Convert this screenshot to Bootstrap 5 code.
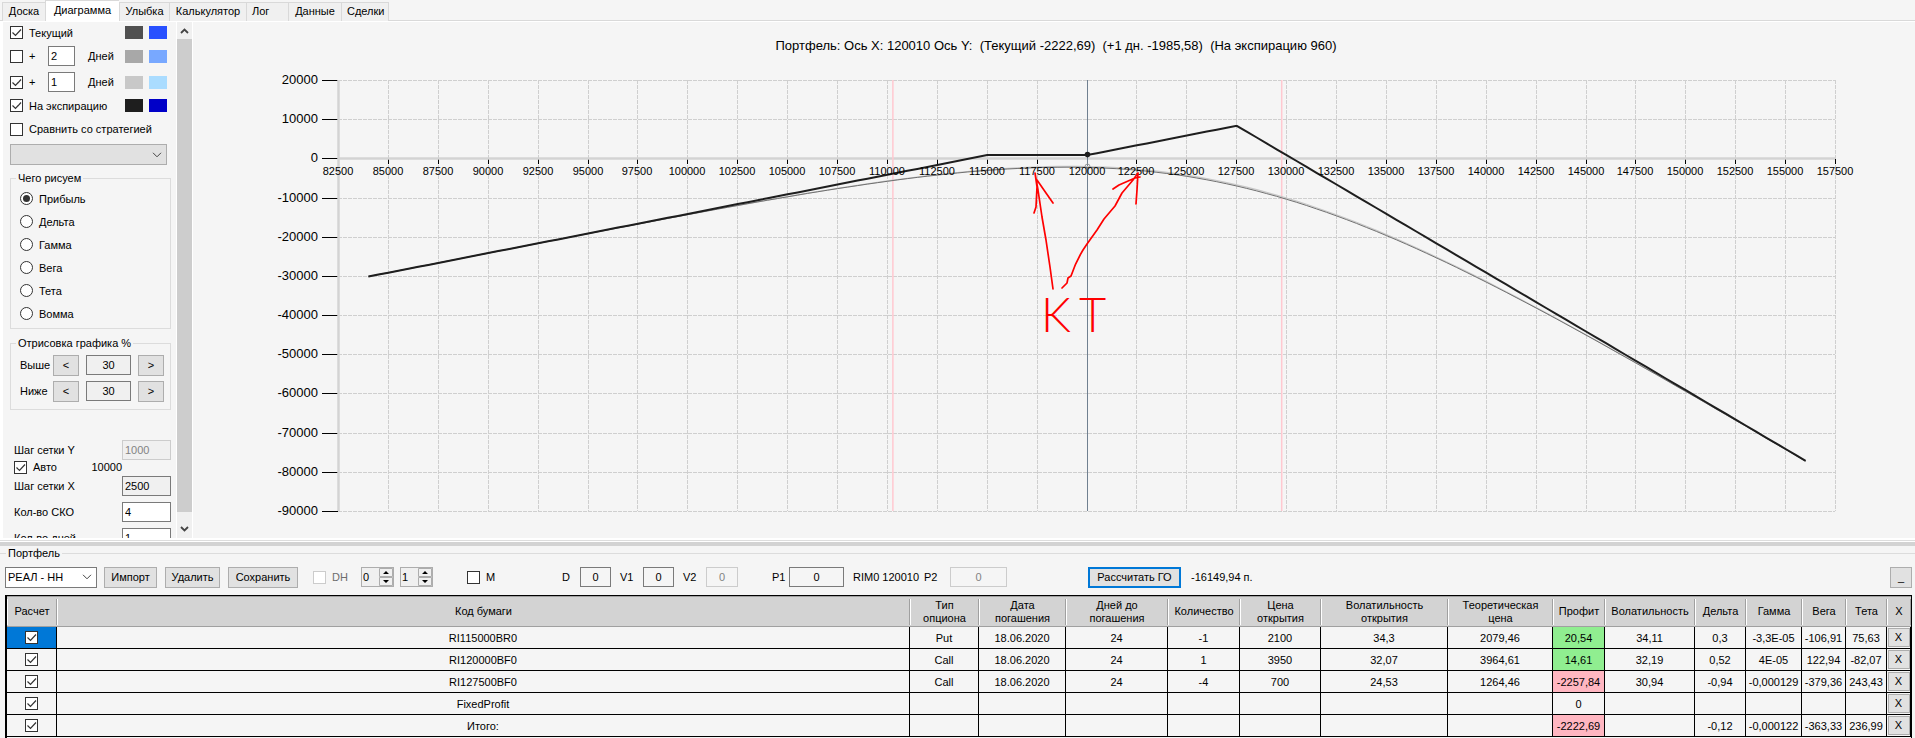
<!DOCTYPE html>
<html lang="ru">
<head>
<meta charset="utf-8">
<meta name="viewport" content="width=device-width, initial-scale=1">
<title>Портфель</title>
<link rel="stylesheet" href="https://cdn.jsdelivr.net/npm/bootstrap@5.3.0/dist/css/bootstrap.min.css">
<style>
:root{--face:#f5f5f5;--ctl:#e1e1e1;--ctl-line:#adadad;--box-line:#7a7a7a;--group:#dcdcdc}
html{height:100%;overflow:hidden}
body{font:11px/14px "Liberation Sans",Arial,sans-serif;color:#000;background:var(--face);height:100%;overflow:hidden}
button,input,select{font:inherit;color:inherit}
/* tabs */
.nav-tabs{height:22px;padding-left:2px;border-bottom:1px solid #fff;background:var(--face);box-shadow:inset 0 -1px 0 #d9d9d9}
.nav-tabs .nav-link{height:19px;padding:0 5px;border:1px solid #d9d9d9;border-right-width:0;border-bottom:0;border-radius:0;margin:0;background:#f0f0f0;color:#000;line-height:17px;text-align:center}
.nav-tabs .nav-item:last-child .nav-link{border-right-width:1px}
.nav-tabs .nav-link.active{height:21px;background:#fff;border-color:#d9d9d9;color:#000;line-height:18px}
.t1{width:43px}.t2{width:74px}.t3{width:50px}.t4{width:77px}.t5{width:42px;text-align:left!important}.t6{width:53px}.t7{width:48px}
/* form controls */
.form-check-input{width:13px;height:13px;margin:0;flex:none;border:1px solid #333;border-radius:0!important;background-color:#fff;float:none}
.form-check-input:checked{background-color:#fff;border-color:#333}
.form-check-input:checked[type=checkbox]{background-image:url("data:image/svg+xml,%3csvg xmlns='http://www.w3.org/2000/svg' viewBox='0 0 11 11'%3e%3cpath fill='none' stroke='%23333' stroke-width='1.2' d='M1.5 5.5l3 3L10 2.5'/%3e%3c/svg%3e")}
.form-check-input[type=radio]{border-radius:50%!important}
.form-check-input:checked[type=radio]{background-image:url("data:image/svg+xml,%3csvg xmlns='http://www.w3.org/2000/svg' viewBox='0 0 11 11'%3e%3ccircle cx='5.5' cy='5.5' r='3.5' fill='%23333'/%3e%3c/svg%3e")}
.form-check-input:disabled{opacity:1;border-color:#ccc}
.form-check-input:disabled~span{color:#6d6d6d}
.form-control{height:20px;min-height:0;padding:0 2px;border:1px solid var(--box-line);border-radius:0;background:#fff;font-size:11px;line-height:18px;color:#000;flex:none}
.form-control[readonly]{background:#f0f0f0}
.form-control:disabled{background:#f0f0f0;border-color:#ccc;color:#838383;opacity:1}
.tools .form-control{background:#f5f5f5;text-align:center}
.form-select{height:21px;padding:0 18px 0 2px;border:1px solid var(--box-line);border-radius:0;font-size:11px;line-height:18px;color:#000;background-color:#fff;background-size:10px 6px;background-position:right 4px center;background-image:url("data:image/svg+xml,%3csvg xmlns='http://www.w3.org/2000/svg' viewBox='0 0 10 6'%3e%3cpath fill='none' stroke='%23444' d='M1 .8l4 4 4-4'/%3e%3c/svg%3e")}
.form-select.grey{width:157px;margin-top:2px;background-color:var(--ctl);border-color:var(--ctl-line)}
.btn{--bs-btn-border-radius:0;height:21px;padding:0;border:1px solid var(--ctl-line);background:var(--ctl);color:#000;font-size:11px;line-height:19px;flex:none}
.btn.focus-btn{border:2px solid #0078d7;line-height:17px}
fieldset{border:1px solid var(--group)}
legend{float:none;width:auto;margin:0;padding:0 2px;font-size:11px;line-height:14px}
/* side panel */
.workspace{min-height:0}
.side{width:176px;flex:none;padding-left:7px;overflow:hidden;border-left:3px solid #fff}
.rowline{display:flex;align-items:center}
.h21{height:21px}.h26{height:26px}
.side fieldset{width:161px;padding:2px 0 3px 9px;margin-top:6px}
.side fieldset.range{padding-bottom:5px;margin-top:7px}
.side legend{margin-left:-4px}
.w27{width:27px}.w26{width:26px}.w45{width:45px;margin:0 7px}.w49{width:49px}
.range label{width:33px}
.chk-gap{gap:6px}
.plus{width:19px}
.unit{margin-left:13px}
.swatch{width:18px;height:13px}
.swatches{display:flex;gap:6px;margin-left:auto;margin-right:9px}
.steps{width:161px;padding-left:4px;margin-top:30px}
.steps .auto{height:14px;margin-bottom:2px}
.steps .auto .step-value{margin-right:49px}
.sbar{width:17px;flex:none;background:#f0f0f0;border:solid #fff;border-width:0 1px}
.sbar svg{display:block;width:15px;flex:none}
.thumb{background:#cdcdcd;flex:1 1 auto}
/* splitter and lower panel */
.splitter{height:8px;flex:none;background:#d3d3d3;border-top:2px solid #fff;box-shadow:inset 0 1px 0 #ddd,inset 0 2px 0 #fff}
.folio{border-width:1px 0 0;flex:none}
.folio legend{margin-left:6px}
.tools{display:grid;grid-template-columns:99px 61px 63px 85px 48px 39px 67px 95px 18px 40px 23px 40px 23px 66px 17px 64px 71px 26px 138px 103px 1fr 22px;align-items:center;height:35px;padding:0 3px 1px 5px;white-space:nowrap}
.spin{position:relative;display:flex;width:33px;height:20px;border:1px solid var(--ctl-line);background:#f0f0f0}
.spin input{width:17px;border:0;background:none;padding:0 1px;line-height:16px}
.spin svg{width:14px;height:18px}
.gridbox{margin:0 3px 0 5px;border:1px solid #000;border-left-width:2px;border-bottom:0;padding-bottom:1px}
.quotes{width:100%;table-layout:fixed;border-collapse:separate;border-spacing:0;text-align:center;border-top:1px solid #a0a0a0}
.quotes th{height:30px;padding:0;background:linear-gradient(#a0a0a0,#a0a0a0) right 2px/1px 26px no-repeat,linear-gradient(#fff,#fff) left 2px/1px 26px no-repeat,#d3d3d3;border-bottom:1px solid #a0a0a0;font-weight:400;line-height:13px;vertical-align:middle}
.quotes td{height:22px;padding:0;border-right:1px solid #000;border-bottom:1px solid #000;line-height:18px;vertical-align:middle;white-space:nowrap}
.quotes .form-check-input{display:block;margin:0 auto}
.quotes .btn{display:block;width:22px;height:19px;line-height:17px;margin:0 auto}
.sel{background:#0078d7}.gain{background:#90ee90}.loss{background:#ffb6c1}
/* chart */
.chart{min-width:0}
.chart svg{display:block;width:100%;height:100%}
.chart text{fill:#000}
.grid-line{stroke:#cfcfcf;stroke-dasharray:4 1;shape-rendering:crispEdges}
.tick{stroke:#000;shape-rendering:crispEdges}
.ylab,.ttl{font-size:13px}
.ttl{white-space:pre}
.xlab{font-size:11px;text-anchor:middle}
.ylab{text-anchor:end}
.ink{fill:none;stroke:#f00;stroke-width:1.7;stroke-linecap:round;stroke-linejoin:round}
.chart text.note{fill:#f00;font:300 47px Lato,sans-serif}
</style>
</head>
<body class="d-flex flex-column">
<ul class="nav nav-tabs flex-nowrap align-items-end flex-shrink-0">
  <li class="nav-item"><a class="nav-link t1" href="#">Доска</a></li>
  <li class="nav-item"><a class="nav-link t2 active" href="#">Диаграмма</a></li>
  <li class="nav-item"><a class="nav-link t3" href="#">Улыбка</a></li>
  <li class="nav-item"><a class="nav-link t4" href="#">Калькулятор</a></li>
  <li class="nav-item"><a class="nav-link t5" href="#">Лог</a></li>
  <li class="nav-item"><a class="nav-link t6" href="#">Данные</a></li>
  <li class="nav-item"><a class="nav-link t7" href="#">Сделки</a></li>
</ul>

<main class="workspace d-flex flex-grow-1">
  <aside class="side">
    <div class="rowline h21"><label class="rowline chk-gap"><input class="form-check-input" type="checkbox" checked><span>Текущий</span></label>
      <span class="swatches"><i class="swatch" style="background:#505050"></i><i class="swatch" style="background:#2850ff"></i></span></div>
    <div class="rowline h26"><label class="rowline chk-gap"><input class="form-check-input" type="checkbox"><span class="plus">+</span></label>
      <input class="form-control w27" value="2" aria-label="Дней, первая линия"><span class="unit">Дней</span>
      <span class="swatches"><i class="swatch" style="background:#a8a8a8"></i><i class="swatch" style="background:#78a8ff"></i></span></div>
    <div class="rowline h26"><label class="rowline chk-gap"><input class="form-check-input" type="checkbox" checked><span class="plus">+</span></label>
      <input class="form-control w27" value="1" aria-label="Дней, вторая линия"><span class="unit">Дней</span>
      <span class="swatches"><i class="swatch" style="background:#c8c8c8"></i><i class="swatch" style="background:#aadcff"></i></span></div>
    <div class="rowline h21"><label class="rowline chk-gap"><input class="form-check-input" type="checkbox" checked><span>На экспирацию</span></label>
      <span class="swatches"><i class="swatch" style="background:#1e1e1e"></i><i class="swatch" style="background:#0000c8"></i></span></div>
    <label class="rowline h26 chk-gap"><input class="form-check-input" type="checkbox"><span>Сравнить со стратегией</span></label>
    <select class="form-select grey" aria-label="Стратегия"><option></option></select>

    <fieldset>
      <legend>Чего рисуем</legend>
      <div id="modes"></div>
    </fieldset>

    <fieldset class="range">
      <legend>Отрисовка графика %</legend>
      <div class="rowline h26"><label for="up">Выше</label><button class="btn w26">&lt;</button><input id="up" class="form-control w45 text-center" value="30" readonly><button class="btn w26">&gt;</button></div>
      <div class="rowline h26"><label for="down">Ниже</label><button class="btn w26">&lt;</button><input id="down" class="form-control w45 text-center" value="30" readonly><button class="btn w26">&gt;</button></div>
    </fieldset>

    <div class="steps">
      <div class="rowline justify-content-between"><label for="sy">Шаг сетки Y</label><input id="sy" class="form-control w49" value="1000" disabled></div>
      <div class="rowline auto justify-content-between"><label class="rowline chk-gap"><input class="form-check-input" type="checkbox" checked><span>Авто</span></label><span class="step-value">10000</span></div>
      <div class="rowline justify-content-between"><label for="sx">Шаг сетки X</label><input id="sx" class="form-control w49" value="2500" readonly></div>
      <div class="rowline justify-content-between" style="margin-top:6px"><label for="sko">Кол-во СКО</label><input id="sko" class="form-control w49" value="4"></div>
      <div class="rowline justify-content-between" style="margin-top:6px"><label for="dn">Кол-во дней</label><input id="dn" class="form-control w49" value="1"></div>
    </div>
  </aside>
  <div class="sbar d-flex flex-column" aria-hidden="true">
    <svg viewBox="0 0 15 17" height="17"><path d="M4 11l3.500-3.500L11 11" fill="none" stroke="#444" stroke-width="1.800"/></svg>
    <div class="thumb"></div>
    <svg viewBox="0 0 15 26" height="26"><path d="M4 15l3.500 3.500L11 15" fill="none" stroke="#444" stroke-width="1.800"/></svg>
  </div>
  <section class="chart flex-grow-1">
    <svg id="plot" viewBox="0 0 1722 516" role="img" aria-label="Диаграмма портфеля"></svg>
  </section>
</main>

<div class="splitter"></div>

<fieldset class="folio">
  <legend>Портфель</legend>
  <div class="tools">
    <select class="form-select" style="width:92px" aria-label="Портфель"><option>РЕАЛ - НН</option></select>
    <button class="btn" style="width:53px">Импорт</button>
    <button class="btn" style="width:55px">Удалить</button>
    <button class="btn" style="width:70px">Сохранить</button>
    <label class="rowline chk-gap"><input class="form-check-input" type="checkbox" disabled><span>DH</span></label>
    <div class="spin"><input value="0" aria-label="DH от"><svg viewBox="0 0 14 18"><path d="M.5.5h13v8H.5zM.5 9.500h13v8H.5z" fill="#f0f0f0" stroke="#adadad"/><path d="M4 6h6L7 3zM4 12h6l-3 3z"/></svg></div>
    <div class="spin"><input value="1" aria-label="DH до"><svg viewBox="0 0 14 18"><path d="M.5.5h13v8H.5zM.5 9.500h13v8H.5z" fill="#f0f0f0" stroke="#adadad"/><path d="M4 6h6L7 3zM4 12h6l-3 3z"/></svg></div>
    <label class="rowline chk-gap"><input class="form-check-input" type="checkbox"><span>M</span></label>
    <label for="d">D</label><input id="d" class="form-control" style="width:31px" value="0">
    <label for="v1">V1</label><input id="v1" class="form-control" style="width:31px" value="0">
    <label for="v2">V2</label><input id="v2" class="form-control" style="width:32px" value="0" disabled>
    <label for="p1">P1</label><input id="p1" class="form-control" style="width:55px" value="0">
    <span>RIM0 120010</span>
    <label for="p2">P2</label><input id="p2" class="form-control" style="width:57px" value="0" disabled>
    <button class="btn focus-btn" style="width:93px">Рассчитать ГО</button>
    <span>-16149,94 п.</span>
    <button class="btn">_</button>
  </div>
  <div class="gridbox">
    <table class="quotes">
      <colgroup><col style="width:50px"><col><col style="width:69px"><col style="width:87px"><col style="width:102px"><col style="width:72px"><col style="width:81px"><col style="width:127px"><col style="width:105px"><col style="width:52px"><col style="width:90px"><col style="width:51px"><col style="width:56px"><col style="width:44px"><col style="width:41px"><col style="width:24px"></colgroup>
      <thead><tr><th>Расчет</th><th>Код бумаги</th><th>Тип<br>опциона</th><th>Дата<br>погашения</th><th>Дней до<br>погашения</th><th>Количество</th><th>Цена<br>открытия</th><th>Волатильность<br>открытия</th><th>Теоретическая<br>цена</th><th>Профит</th><th>Волатильность</th><th>Дельта</th><th>Гамма</th><th>Вега</th><th>Тета</th><th>X</th></tr></thead>
      <tbody id="rows"></tbody>
    </table>
  </div>
</fieldset>

<script src="https://cdn.jsdelivr.net/npm/bootstrap@5.3.0/dist/js/bootstrap.bundle.min.js"></script>
<script>
document.getElementById('modes').innerHTML = ['Прибыль','Дельта','Гамма','Вега','Тета','Вомма'].map((t, i) =>
  `<label class="rowline chk-gap" style="height:23px"><input class="form-check-input" type="radio" name="mode"${i ? '' : ' checked'}><span>${t}</span></label>`).join('');

const data = [
  ['RI115000BR0','Put','18.06.2020','24','-1','2100','34,3','2079,46','20,54','34,11','0,3','-3,3E-05','-106,91','75,63'],
  ['RI120000BF0','Call','18.06.2020','24','1','3950','32,07','3964,61','14,61','32,19','0,52','4E-05','122,94','-82,07'],
  ['RI127500BF0','Call','18.06.2020','24','-4','700','24,53','1264,46','-2257,84','30,94','-0,94','-0,000129','-379,36','243,43'],
  ['FixedProfit','','','','','','','','0','','','','',''],
  ['Итого:','','','','','','','','-2222,69','','-0,12','-0,000122','-363,33','236,99']];
document.getElementById('rows').innerHTML = data.map((r, i) =>
  `<tr><td${i ? '' : ' class="sel"'}><input class="form-check-input" type="checkbox" checked aria-label="${r[0]}"></td>` +
  r.map((c, j) => `<td${j === 8 && c !== '0' ? ` class="${c[0] === '-' ? 'loss' : 'gain'}"` : ''}>${c}</td>`).join('') +
  '<td><button class="btn">X</button></td></tr>').join('');

// Chart: plot area and scales
const L = 145, R = 1642, T = 58, B = 489;
const X = v => L + (v - 82500) / 75000 * (R - L);
const Y = v => T + (20000 - v) / 110000 * (B - T);
const snap = v => Math.round(v) + 0.5;
let s = '', labels = '';
for (let v = 82500; v <= 157500; v += 2500) {
  const x = snap(X(v));
  s += `<path class="grid-line" d="M${x} ${T}V${B}"/><path class="tick" d="M${x} ${Y(0) + 1}v5"/>`;
  labels += `<text class="xlab" x="${Math.round(X(v))}" y="153">${v}</text>`;
}
for (let v = 20000; v >= -90000; v -= 10000) {
  const y = snap(Y(v));
  s += `<path class="grid-line" d="M${L} ${y}H${R}"/><path class="tick" d="M129 ${y}H${L}"/>`;
  labels += `<text class="ylab" x="125" y="${Math.round(Y(v)) + 4}">${v}</text>`;
}
s += `<path d="M${L + 0.5} ${T}V${B}M${L} ${snap(Y(0))}H${R}" stroke="#d3d3d3" stroke-width="2.500"/>`;

// Option prices (zero rate) for the three legs
const cdf = z => { const t = 1 / (1 + 0.2316419 * Math.abs(z));
  const p = Math.exp(-z * z / 2) * 0.3989423 * t * (0.3193815 + t * (-0.3565638 + t * (1.781478 + t * (-1.821256 + t * 1.330274))));
  return z > 0 ? 1 - p : p; };
const call = (F, K, vol, days) => { if (!days) return Math.max(F - K, 0);
  const q = vol * Math.sqrt(days / 365), d = Math.log(F / K) / q + q / 2;
  return F * cdf(d) - K * cdf(d - q); };
const profit = (F, days) => 2100 - (call(F, 115000, 0.3411, days) - F + 115000)
  + call(F, 120000, 0.3219, days) - 3950 - 4 * (call(F, 127500, 0.3094, days) - 700);
const curve = days => { const pts = []; for (let F = 84000; F <= 156000; F += 500) pts.push((X(F) + 0.5).toFixed(1) + ',' + (Y(profit(F, days)) + 0.5).toFixed(1)); return pts.join(' '); };

const cur = snap(X(120010));
s += `<path d="M${X(110300)} ${T}V${B}M${X(129780)} ${T}V${B}" stroke="#ffc8d0" stroke-width="1.500"/>
<path d="M${cur} ${T}V${B}" stroke="#708090"/>
<polyline points="${curve(23)}" fill="none" stroke="#c8c8c8" stroke-width="1.200"/>
<polyline points="${curve(24)}" fill="none" stroke="#707070"/>
<polyline points="${curve(0)}" fill="none" stroke="#1e1e1e" stroke-width="2"/>
<circle cx="${cur}" cy="${Y(960)}" r="2.800" fill="#1e1e1e"/>
<circle cx="${cur}" cy="${Y(-2100)}" r="2.500" fill="none" stroke="#999"/>`;
s += labels + `<text class="ttl" x="863" y="28" text-anchor="middle">Портфель: Ось X: 120010 Ось Y:  (Текущий -2222,69)  (+1 дн. -1985,58)  (На экспирацию 960)</text>
<g transform="translate(-192 -22)">
<path class="ink" d="M1052 289L1049 267 1045 240 1041 217 1037 190 1034 173 1036 187 1035 207 1033 213M1036 180L1045 193 1052 203"/>
<path class="ink" d="M1061 288L1066 283 1067 278 1070 276Q1076 258 1086 244L1096 230 1103 219 1114 206 1121 193 1132 180 1137 173 1136 190 1135 204M1112 189L1118 185 1134 178 1139 177"/>
<text class="note" x="1040" y="332">K</text><text class="note" x="1078" y="332">T</text></g>`;
document.getElementById('plot').innerHTML = s;
</script>
</body>
</html>
